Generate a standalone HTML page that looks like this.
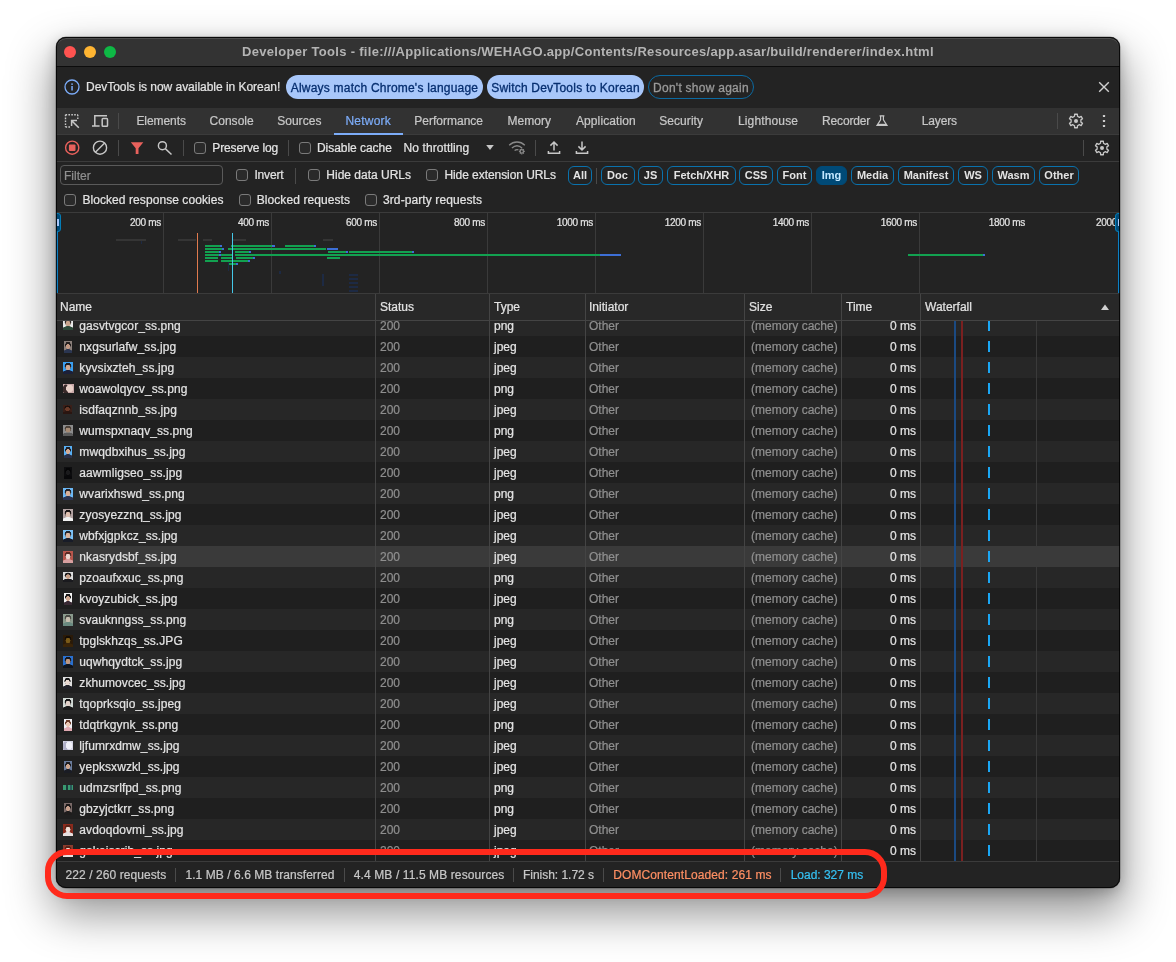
<!DOCTYPE html>
<html lang="en"><head><meta charset="utf-8"><title>Developer Tools</title>
<style>
*{box-sizing:border-box;margin:0;padding:0}
html,body{width:1176px;height:962px;overflow:hidden;background:#fff}
body{font-family:"Liberation Sans",sans-serif;font-size:12px;color:#e3e3e3;position:relative;-webkit-text-stroke:.22px}
#win{position:absolute;left:56px;top:37px;width:1064px;height:851px;border-radius:10px;background:#232323;
 box-shadow:0 0 0 .5px rgba(0,0,0,.35),0 22px 45px 4px rgba(0,0,0,.42),0 4px 14px rgba(0,0,0,.22);}
#edge{position:absolute;inset:0;border-radius:10px;border:1px solid rgba(0,0,0,.8);box-shadow:inset 0 1px 0 rgba(255,255,255,.13);pointer-events:none}
#clip{position:absolute;inset:0;border-radius:10px;overflow:hidden}
#pg{will-change:transform;position:absolute;left:-56px;top:-37px;width:1176px;height:962px}
#pg>*{position:absolute}
.a{position:absolute;white-space:nowrap;line-height:16px}
#title{left:56px;top:37px;width:1064px;height:30px;background:#333333;border-bottom:1px solid #0c0c0c}
#ttext{-webkit-text-stroke:0;left:56px;width:1064px;top:44px;text-align:center;font-weight:bold;font-size:13px;color:#b4b4b4;line-height:16px}
.tl{width:12px;height:12px;border-radius:50%;top:46px}
#info{left:56px;top:67px;width:1064px;height:41px;background:#232323}
#tabs{left:56px;top:108px;width:1064px;height:27px;background:#323232;border-bottom:1px solid #3b3b3b}
#tool{left:56px;top:135px;width:1064px;height:27px;background:#232323;border-bottom:1px solid #3b3b3b}
.tab{top:113px;color:#c7c7c7;font-size:12px}
.sep{width:1px;background:#4a4a4a}
.cb{width:12px;height:12px;border:1px solid #7a7a7a;border-radius:3px;background:#2a2a2a}
.btn{top:75px;height:24px;border-radius:12px;-webkit-text-stroke:.3px;background:#a8c7fa;color:#062e6f;font-size:12px;line-height:24px;padding-top:1px;text-align:center}
.pill{-webkit-text-stroke:0;top:166px;height:19px;border:1px solid #0a72ad;border-radius:6px;font-size:11px;font-weight:bold;color:#e3e3e3;line-height:17px;text-align:center}
.pill.sel{background:#004a77;border-color:#004a77;color:#c2e7ff}
#ov{left:56px;top:212px;width:1064px;height:82px;background:#232323;border-top:1px solid #3b3b3b;border-bottom:1px solid #3b3b3b}
.gl{top:213px;width:1px;height:80px;background:#3a3a3a}
.ol{top:215px;font-size:10px;letter-spacing:-.3px;color:#e3e3e3;text-align:right;width:60px;line-height:16px}
.bar{height:2px;background:#12a150}
.bb{height:2px;background:#3d6fd6}
.gb{height:2px;background:#353535}
#hdr{left:56px;top:294px;width:1064px;height:27px;background:#282828;border-bottom:1px solid #444}
.h{top:299px;color:#e3e3e3}
.cs{width:1px;background:#444;top:294px;height:568px}
#body{left:56px;top:321px;width:1064px;height:541px;overflow:hidden}
.r{position:absolute;left:0;width:1064px;height:21px;background:#1f1f1f}
.r.odd{background:#272727}
.r.hov{background:#3a3a3a}
.r span{position:absolute;top:3px;line-height:16px;white-space:nowrap}
.r .n{left:23.3px;color:#e3e3e3;letter-spacing:.09px}
.r .s{left:324px;color:#8f8f8f}
.r .t{left:438px;color:#e3e3e3}
.r .in{left:533px;color:#8f8f8f}
.r .sz{left:695px;color:#8f8f8f}
.r .tm{right:204px;color:#e3e3e3}
.r .tk{position:absolute;left:932px;top:5px;width:2px;height:11px;background:#1aa7f5}
.r .th{position:absolute}
#status{left:56px;top:861px;width:1064px;height:27px;background:#232323;border-top:1px solid #3b3b3b}
.st{top:867px;color:#c7c7c7}
#ann{left:45px;top:848.5px;width:841.5px;height:50.5px;border:6.5px solid #ff2a1c;border-radius:22px}

</style></head><body>
<div id="win"><div id="clip"><div id="pg">
<div id="title"></div>
<div class="tl" style="left:64px;background:#ff5350"></div>
<div class="tl" style="left:84px;background:#ffb532"></div>
<div class="tl" style="left:104px;background:#0eb845"></div>
<div id="ttext" class="a" style="top:44px;letter-spacing:0.302px">Developer Tools - file:///Applications/WEHAGO.app/Contents/Resources/app.asar/build/renderer/index.html</div>

<div id="info"></div>
<svg style="left:64px;top:79px" width="16" height="16" viewBox="0 0 16 16"><circle cx="8" cy="8" r="7" fill="none" stroke="#7cacf8" stroke-width="1.3"/><rect x="7.3" y="7" width="1.5" height="4.5" fill="#7cacf8"/><rect x="7.3" y="4.4" width="1.5" height="1.5" fill="#7cacf8"/></svg>
<div class="a" style="left:86px;top:79px;color:#e3e3e3;letter-spacing:-0.033px">DevTools is now available in Korean!</div>
<div class="a btn" style="left:286px;width:197px;letter-spacing:0.216px">Always match Chrome's language</div>
<div class="a btn" style="left:487px;width:157px;letter-spacing:0.208px">Switch DevTools to Korean</div>
<div class="a btn" style="left:648px;width:106px;background:none;border:1px solid #0b6aa2;color:#9a9a9a;line-height:22px;letter-spacing:0.261px">Don't show again</div>
<svg style="left:1098px;top:81px" width="12" height="12" viewBox="0 0 12 12"><path d="M1.2 1.2L10.8 10.8M10.8 1.2L1.2 10.8" stroke="#d0d0d0" stroke-width="1.4" fill="none"/></svg>

<div id="tabs"></div>
<div class="a tab" style="left:136.4px;letter-spacing:-0.062px">Elements</div>
<div class="a tab" style="left:209.5px;letter-spacing:0.028px">Console</div>
<div class="a tab" style="left:277.2px;letter-spacing:0.028px">Sources</div>
<div class="a tab" style="left:345.4px;color:#7cacf8;letter-spacing:0.231px">Network</div>
<div style="left:334px;top:133px;width:69px;height:2px;background:#7cacf8"></div>
<div class="a tab" style="left:414.3px;letter-spacing:-0.0px">Performance</div>
<div class="a tab" style="left:507.5px;letter-spacing:0.031px">Memory</div>
<div class="a tab" style="left:575.9px;letter-spacing:0.118px">Application</div>
<div class="a tab" style="left:659.3px;letter-spacing:0.049px">Security</div>
<div class="a tab" style="left:738px;letter-spacing:0.142px">Lighthouse</div>
<div class="a tab" style="left:822px;letter-spacing:-0.151px">Recorder</div>
<div class="a tab" style="left:921.8px;letter-spacing:-0.166px">Layers</div>
<div class="sep" style="left:118px;top:113px;height:16px"></div>
<div class="sep" style="left:1057px;top:113px;height:16px"></div>

<div id="tool"></div>
<!-- inspect -->
<svg style="left:64px;top:113px" width="16" height="16" viewBox="0 0 16 16" fill="none" stroke="#c7c7c7">
<path d="M1.5 1.7H13.8" stroke-width="1.4" stroke-dasharray="1.6 1.3"/>
<path d="M1.5 1.7V14" stroke-width="1.4" stroke-dasharray="1.6 1.3"/>
<path d="M13.8 1.7V6" stroke-width="1.4" stroke-dasharray="1.6 1.3"/>
<path d="M1.5 14H6" stroke-width="1.4" stroke-dasharray="1.6 1.3"/>
<path d="M14.8 14.8L8 8M7.6 13V7.6H13" stroke-width="1.5"/>
</svg>
<!-- device -->
<svg style="left:91px;top:113px" width="18" height="16" viewBox="0 0 18 16" fill="none" stroke="#c7c7c7" stroke-width="1.5">
<path d="M16 2.7H3.8V12.7M1 12.9H8.6"/>
<rect x="11.2" y="5.6" width="5.3" height="7.6" rx="0.8"/>
</svg>
<!-- record -->
<svg style="left:64px;top:140px" width="16" height="16" viewBox="0 0 16 16"><circle cx="8.2" cy="7.7" r="6.6" fill="none" stroke="#e8615c" stroke-width="1.4"/><rect x="4.9" y="4.4" width="6.6" height="6.6" rx="1" fill="#e8615c"/></svg>
<!-- clear -->
<svg style="left:92px;top:140px" width="16" height="16" viewBox="0 0 16 16" fill="none" stroke="#c7c7c7" stroke-width="1.4"><circle cx="8" cy="7.7" r="6.6"/><path d="M3.4 12.3L12.6 3.1"/></svg>
<!-- filter -->
<svg style="left:130px;top:141px" width="14" height="14" viewBox="0 0 14 14"><path d="M0.8 1.2H13.3L8.5 7.3V12.9H5.7V7.3Z" fill="#e8615c"/></svg>
<!-- search -->
<svg style="left:156px;top:139px" width="18" height="18" viewBox="0 0 18 18" fill="none" stroke="#c7c7c7" stroke-width="1.45"><circle cx="6.4" cy="6.7" r="4"/><path d="M9.3 9.6L15.5 15.5"/></svg>
<!-- dropdown -->
<svg style="left:486px;top:145px" width="8" height="5" viewBox="0 0 8 5"><path d="M0.2 0H7.8L4 5Z" fill="#c7c7c7"/></svg>
<!-- wifi -->
<svg style="left:508px;top:140px" width="18" height="16" viewBox="0 0 18 16" fill="none" stroke="#8a8a8a" stroke-width="1.3">
<path d="M1.2 5.2C5.6 0.9 12.4 0.9 16.8 5.2"/><path d="M3.9 8C7 5.2 11 5.2 14.1 8"/><path d="M6.6 10.6C8 9.5 9.2 9.4 10.4 9.9"/>
<circle cx="13.8" cy="11.4" r="1.7"/><path d="M13.8 8.4V9.4M13.8 13.4V14.4M10.9 11.4H11.9M15.8 11.4H16.8M11.8 9.3L12.5 10M15.1 12.7L15.9 13.5M15.9 9.3L15.1 10M11.8 13.5L12.5 12.8" stroke-width="1.1"/>
</svg>
<!-- upload -->
<svg style="left:547px;top:140px" width="14" height="15" viewBox="0 0 14 15" fill="none" stroke="#c7c7c7" stroke-width="1.5"><path d="M7 10.4V2.2M3.4 5.6L7 2L10.6 5.6M1.4 11V13.2H12.6V11"/></svg>
<!-- download -->
<svg style="left:575px;top:140px" width="14" height="15" viewBox="0 0 14 15" fill="none" stroke="#c7c7c7" stroke-width="1.5"><path d="M7 1.4V9.6M3.4 6.4L7 10L10.6 6.4M1.4 11V13.2H12.6V11"/></svg>
<!-- flask -->
<svg style="left:875px;top:114px" width="14" height="14" viewBox="0 0 14 14" fill="none" stroke="#c7c7c7" stroke-width="1.2"><path d="M4.6 1.8H9.4M5.6 1.8V5.8L2 11.4H12L8.4 5.8V1.8"/><path d="M3 10.4H11" stroke-width="1.2"/></svg>
<!-- gears -->
<svg style="left:1068px;top:113px" width="16" height="16" viewBox="-8 -8 16 16"><path d="M-1.48 -4.78 L-1.37 -6.76 L1.37 -6.76 L1.48 -4.78 L3.40 -3.67 L5.17 -4.57 L6.54 -2.19 L4.88 -1.11 L4.88 1.11 L6.54 2.19 L5.17 4.57 L3.40 3.67 L1.48 4.78 L1.37 6.76 L-1.37 6.76 L-1.48 4.78 L-3.40 3.67 L-5.17 4.57 L-6.54 2.19 L-4.88 1.11 L-4.88 -1.11 L-6.54 -2.19 L-5.17 -4.57 L-3.40 -3.67Z" fill="none" stroke="#c7c7c7" stroke-width="1.3" stroke-linejoin="round"/><circle r="2" fill="#c7c7c7"/></svg>
<svg style="left:1094px;top:140px" width="16" height="16" viewBox="-8 -8 16 16"><path d="M-1.48 -4.78 L-1.37 -6.76 L1.37 -6.76 L1.48 -4.78 L3.40 -3.67 L5.17 -4.57 L6.54 -2.19 L4.88 -1.11 L4.88 1.11 L6.54 2.19 L5.17 4.57 L3.40 3.67 L1.48 4.78 L1.37 6.76 L-1.37 6.76 L-1.48 4.78 L-3.40 3.67 L-5.17 4.57 L-6.54 2.19 L-4.88 1.11 L-4.88 -1.11 L-6.54 -2.19 L-5.17 -4.57 L-3.40 -3.67Z" fill="none" stroke="#c7c7c7" stroke-width="1.3" stroke-linejoin="round"/><circle r="2" fill="#c7c7c7"/></svg>
<!-- kebab -->
<svg style="left:1102px;top:114px" width="4" height="14" viewBox="0 0 4 14" fill="#d0d0d0"><rect x="0.9" y="0.9" width="2.2" height="2.2" rx=".5"/><rect x="0.9" y="5.9" width="2.2" height="2.2" rx=".5"/><rect x="0.9" y="10.9" width="2.2" height="2.2" rx=".5"/></svg>

<div class="sep" style="left:118px;top:140px;height:16px"></div>
<div class="sep" style="left:183px;top:140px;height:16px"></div>
<div class="sep" style="left:288px;top:140px;height:16px"></div>
<div class="sep" style="left:535px;top:140px;height:16px"></div>
<div class="sep" style="left:1083px;top:140px;height:16px"></div>
<div class="cb" style="left:194px;top:142px"></div>
<div class="a" style="left:212.3px;top:140px;letter-spacing:-0.125px">Preserve log</div>
<div class="cb" style="left:299px;top:142px"></div>
<div class="a" style="left:316.9px;top:140px;letter-spacing:-0.031px">Disable cache</div>
<div class="a" style="left:403.6px;top:140px;letter-spacing:0.075px">No throttling</div>

<div style="left:60px;top:165px;width:163px;height:20px;border:1px solid #5a5a5a;border-radius:4px;background:#232323"></div>
<div class="a" style="left:64px;top:168px;color:#8f8f8f">Filter</div>
<div class="cb" style="left:236px;top:169px"></div>
<div class="a" style="left:254.4px;top:167px;letter-spacing:-0.143px">Invert</div>
<div class="sep" style="left:295px;top:168px;height:16px"></div>
<div class="cb" style="left:308px;top:169px"></div>
<div class="a" style="left:326.3px;top:167px;letter-spacing:-0.001px">Hide data URLs</div>
<div class="cb" style="left:426px;top:169px"></div>
<div class="a" style="left:444.4px;top:167px;letter-spacing:-0.063px">Hide extension URLs</div>
<div class="a pill" style="left:568px;width:24px">All</div>
<div class="sep" style="left:596px;top:168px;height:16px"></div>
<div class="a pill" style="left:600.5px;width:34px">Doc</div>
<div class="a pill" style="left:638px;width:25px">JS</div>
<div class="a pill" style="left:667px;width:69px">Fetch/XHR</div>
<div class="a pill" style="left:739px;width:34px">CSS</div>
<div class="a pill" style="left:777px;width:35px">Font</div>
<div class="a pill sel" style="left:816px;width:31px">Img</div>
<div class="a pill" style="left:851px;width:43px">Media</div>
<div class="a pill" style="left:898px;width:56px">Manifest</div>
<div class="a pill" style="left:958px;width:30px">WS</div>
<div class="a pill" style="left:992px;width:43px">Wasm</div>
<div class="a pill" style="left:1039px;width:40px">Other</div>

<div class="cb" style="left:64px;top:194px"></div>
<div class="a" style="left:82.4px;top:192px;letter-spacing:0.073px">Blocked response cookies</div>
<div class="cb" style="left:239px;top:194px"></div>
<div class="a" style="left:256.7px;top:192px;letter-spacing:0.083px">Blocked requests</div>
<div class="cb" style="left:365px;top:194px"></div>
<div class="a" style="left:383px;top:192px;letter-spacing:0.095px">3rd-party requests</div>

<div id="ov"></div>
<div class="gl" style="left:163px"></div>
<div class="gl" style="left:271px"></div>
<div class="gl" style="left:379px"></div>
<div class="gl" style="left:487px"></div>
<div class="gl" style="left:595px"></div>
<div class="gl" style="left:703px"></div>
<div class="gl" style="left:811px"></div>
<div class="gl" style="left:919px"></div>
<div class="a ol" style="left:101px">200 ms</div>
<div class="a ol" style="left:209px">400 ms</div>
<div class="a ol" style="left:317px">600 ms</div>
<div class="a ol" style="left:425px">800 ms</div>
<div class="a ol" style="left:533px">1000 ms</div>
<div class="a ol" style="left:641px">1200 ms</div>
<div class="a ol" style="left:749px">1400 ms</div>
<div class="a ol" style="left:857px">1600 ms</div>
<div class="a ol" style="left:965px">1800 ms</div>
<div class="a ol" style="left:1078px;width:40px;text-align:left;left:1096px">2000</div>
<div class="gb" style="left:116px;top:239px;width:30px"></div>
<div class="gb" style="left:178px;top:239px;width:18px"></div>
<div class="gb" style="left:203px;top:239px;width:9px"></div>
<div class="gb" style="left:233px;top:239px;width:13px"></div>
<div class="gb" style="left:323px;top:239px;width:10px"></div>
<div class="bar" style="left:205px;top:245px;width:15px"></div>
<div class="bb" style="left:220px;top:245px;width:2px"></div>
<div class="bar" style="left:231px;top:245px;width:41px"></div>
<div class="bb" style="left:272px;top:245px;width:3px"></div>
<div class="bar" style="left:285px;top:245px;width:29px"></div>
<div class="bb" style="left:314px;top:245px;width:2px"></div>
<div class="bar" style="left:205px;top:248px;width:17px"></div>
<div class="bb" style="left:222px;top:248px;width:2px"></div>
<div class="bar" style="left:228px;top:248px;width:98px"></div>
<div class="bb" style="left:327px;top:248px;width:11px"></div>
<div class="bar" style="left:205px;top:251px;width:14px"></div>
<div class="bb" style="left:219px;top:251px;width:2px"></div>
<div class="bar" style="left:235px;top:251px;width:14px"></div>
<div class="bb" style="left:249px;top:251px;width:2px"></div>
<div class="bar" style="left:328px;top:251px;width:18px"></div>
<div class="bb" style="left:346px;top:251px;width:2px"></div>
<div class="bar" style="left:349px;top:251px;width:63px"></div>
<div class="bb" style="left:412px;top:251px;width:2px"></div>
<div class="bar" style="left:205px;top:254px;width:14px"></div>
<div class="bar" style="left:221px;top:254px;width:11px"></div>
<div class="bb" style="left:219px;top:254px;width:2px"></div>
<div class="bar" style="left:235px;top:254px;width:365px"></div>
<div class="bb" style="left:600px;top:254px;width:21px"></div>
<div class="bar" style="left:205px;top:257px;width:13px"></div>
<div class="bar" style="left:221px;top:257px;width:11px"></div>
<div class="bar" style="left:236px;top:257px;width:17px"></div>
<div class="bb" style="left:253px;top:257px;width:2px"></div>
<div class="bar" style="left:327px;top:257px;width:13px"></div>
<div class="bar" style="left:205px;top:260px;width:13px"></div>
<div class="bar" style="left:221px;top:260px;width:27px"></div>
<div class="bb" style="left:248px;top:260px;width:2px"></div>
<div class="bar" style="left:229px;top:263px;width:7px"></div>
<div class="bb" style="left:236px;top:263px;width:2px"></div>
<div class="bar" style="left:908px;top:254px;width:75px"></div>
<div class="bb" style="left:983px;top:254px;width:2px"></div>
<div style="left:279px;top:271px;width:2px;height:3px;background:#1d2a44"></div>
<div style="left:322px;top:274px;width:2px;height:12px;background:#1d2a44"></div>
<div style="left:349px;top:274px;width:9px;height:2px;background:#1d2a44"></div>
<div style="left:349px;top:278px;width:9px;height:2px;background:#1d2a44"></div>
<div style="left:349px;top:282px;width:9px;height:2px;background:#1d2a44"></div>
<div style="left:349px;top:286px;width:9px;height:2px;background:#1d2a44"></div>
<div style="left:349px;top:290px;width:9px;height:2px;background:#1d2a44"></div>
<div style="left:228px;top:262px;width:1px;height:9px;background:#1d2a44"></div>
<div style="left:141px;top:241px;width:1px;height:3px;background:#1d2a44"></div>
<div style="left:197px;top:233px;width:1px;height:60px;background:#e07a4e"></div>
<div style="left:232px;top:233px;width:1px;height:60px;background:#45c8e8"></div>
<div style="left:56px;top:213px;width:2px;height:80px;background:#0b7fc4"></div>
<div style="left:54px;top:213px;width:7px;height:19px;background:#004a77;border:1px solid #047db7;border-radius:3px"></div>
<div style="left:57px;top:219px;width:1.5px;height:7px;background:#a8c7fa"></div>
<div style="left:1118px;top:213px;width:2px;height:80px;background:#0b7fc4"></div>
<div style="left:1115px;top:213px;width:7px;height:19px;background:#004a77;border:1px solid #047db7;border-radius:3px"></div>
<div style="left:1117.5px;top:219px;width:1.5px;height:7px;background:#a8c7fa"></div>

<div id="hdr"></div>
<div class="a h" style="left:60px">Name</div>
<div class="a h" style="left:380px">Status</div>
<div class="a h" style="left:494px">Type</div>
<div class="a h" style="left:589px">Initiator</div>
<div class="a h" style="left:749px">Size</div>
<div class="a h" style="left:846px">Time</div>
<div class="a h" style="left:925px">Waterfall</div>
<svg style="left:1100px;top:304px" width="10" height="6" viewBox="0 0 10 6"><path d="M1 6L5 0.5L9 6Z" fill="#d0d0d0"/></svg>

<div id="body">
<div class="r odd" style="top:-6px"><i class="th" style="left:7px;top:3px;width:10px;height:12px;background:radial-gradient(ellipse 27% 24% at 50% 46%,#c9a48c 85%,transparent 100%),radial-gradient(ellipse 36% 30% at 50% 34%,#2a2624 88%,transparent 100%),radial-gradient(ellipse 70% 42% at 50% 108%,#2f4a3a 90%,transparent 100%),#e8e8e8"></i><span class="n">gasvtvgcor_ss.png</span><span class="s">200</span><span class="t">png</span><span class="in">Other</span><span class="sz">(memory cache)</span><span class="tm">0 ms</span><b class="tk"></b></div>
<div class="r" style="top:15px"><i class="th" style="left:8.3px;top:4.5px;width:8px;height:12px;background:radial-gradient(ellipse 27% 24% at 50% 46%,#c49a84 85%,transparent 100%),radial-gradient(ellipse 36% 30% at 50% 34%,#241f1e 88%,transparent 100%),radial-gradient(ellipse 70% 42% at 50% 108%,#2a3550 90%,transparent 100%),#8a7f7a"></i><span class="n">nxgsurlafw_ss.jpg</span><span class="s">200</span><span class="t">jpeg</span><span class="in">Other</span><span class="sz">(memory cache)</span><span class="tm">0 ms</span><b class="tk"></b></div>
<div class="r odd" style="top:36px"><i class="th" style="left:7px;top:4.5px;width:10px;height:12px;background:radial-gradient(ellipse 27% 24% at 50% 46%,#d0a890 85%,transparent 100%),radial-gradient(ellipse 36% 30% at 50% 34%,#1c1c22 88%,transparent 100%),radial-gradient(ellipse 70% 42% at 50% 108%,#1c2038 90%,transparent 100%),#3a9ff0"></i><span class="n">kyvsixzteh_ss.jpg</span><span class="s">200</span><span class="t">jpeg</span><span class="in">Other</span><span class="sz">(memory cache)</span><span class="tm">0 ms</span><b class="tk"></b></div>
<div class="r" style="top:57px"><i class="th" style="left:7px;top:6px;width:10.5px;height:8.5px;background:radial-gradient(ellipse 35% 45% at 60% 50%,#e8d0c8 85%,transparent),radial-gradient(ellipse 30% 60% at 25% 60%,#3a2a2a 80%,transparent),#c9a9a9"></i><span class="n">woawolqycv_ss.png</span><span class="s">200</span><span class="t">png</span><span class="in">Other</span><span class="sz">(memory cache)</span><span class="tm">0 ms</span><b class="tk"></b></div>
<div class="r odd" style="top:78px"><i class="th" style="left:7px;top:5.8px;width:9px;height:8.8px;background:radial-gradient(ellipse 27% 24% at 50% 46%,#6a3a28 85%,transparent 100%),radial-gradient(ellipse 36% 30% at 50% 34%,#1a0f0c 88%,transparent 100%),radial-gradient(ellipse 70% 42% at 50% 108%,#2a1510 90%,transparent 100%),#3a1f18"></i><span class="n">isdfaqznnb_ss.jpg</span><span class="s">200</span><span class="t">jpeg</span><span class="in">Other</span><span class="sz">(memory cache)</span><span class="tm">0 ms</span><b class="tk"></b></div>
<div class="r" style="top:99px"><i class="th" style="left:7px;top:5px;width:10px;height:11.3px;background:radial-gradient(ellipse 27% 24% at 50% 46%,#a58a74 85%,transparent 100%),radial-gradient(ellipse 36% 30% at 50% 34%,#4a4038 88%,transparent 100%),radial-gradient(ellipse 70% 42% at 50% 108%,#5a5a5a 90%,transparent 100%),#8c8c8c"></i><span class="n">wumspxnaqv_ss.png</span><span class="s">200</span><span class="t">png</span><span class="in">Other</span><span class="sz">(memory cache)</span><span class="tm">0 ms</span><b class="tk"></b></div>
<div class="r odd" style="top:120px"><i class="th" style="left:8px;top:4.5px;width:8px;height:12px;background:radial-gradient(ellipse 27% 24% at 50% 46%,#d4ac94 85%,transparent 100%),radial-gradient(ellipse 36% 30% at 50% 34%,#1e1e24 88%,transparent 100%),radial-gradient(ellipse 70% 42% at 50% 108%,#2a3048 90%,transparent 100%),#58b0f5"></i><span class="n">mwqdbxihus_ss.jpg</span><span class="s">200</span><span class="t">jpeg</span><span class="in">Other</span><span class="sz">(memory cache)</span><span class="tm">0 ms</span><b class="tk"></b></div>
<div class="r" style="top:141px"><i class="th" style="left:8px;top:4.5px;width:8px;height:12px;background:radial-gradient(ellipse 27% 24% at 50% 46%,#1a1a1c 85%,transparent 100%),radial-gradient(ellipse 36% 30% at 50% 34%,#050506 88%,transparent 100%),radial-gradient(ellipse 70% 42% at 50% 108%,#08080a 90%,transparent 100%),#0c0c0e"></i><span class="n">aawmligseo_ss.jpg</span><span class="s">200</span><span class="t">jpeg</span><span class="in">Other</span><span class="sz">(memory cache)</span><span class="tm">0 ms</span><b class="tk"></b></div>
<div class="r odd" style="top:162px"><i class="th" style="left:7px;top:4.5px;width:10px;height:12px;background:radial-gradient(ellipse 27% 24% at 50% 46%,#d8b098 85%,transparent 100%),radial-gradient(ellipse 36% 30% at 50% 34%,#222228 88%,transparent 100%),radial-gradient(ellipse 70% 42% at 50% 108%,#2c3450 90%,transparent 100%),#6cb8f5"></i><span class="n">wvarixhswd_ss.png</span><span class="s">200</span><span class="t">png</span><span class="in">Other</span><span class="sz">(memory cache)</span><span class="tm">0 ms</span><b class="tk"></b></div>
<div class="r" style="top:183px"><i class="th" style="left:7px;top:4.5px;width:10px;height:12px;background:radial-gradient(ellipse 27% 24% at 50% 46%,#e0c0b0 85%,transparent 100%),radial-gradient(ellipse 36% 30% at 50% 34%,#1a1414 88%,transparent 100%),radial-gradient(ellipse 70% 42% at 50% 108%,#f0f0f0 90%,transparent 100%),#b4a4a4"></i><span class="n">zyosyezznq_ss.jpg</span><span class="s">200</span><span class="t">jpeg</span><span class="in">Other</span><span class="sz">(memory cache)</span><span class="tm">0 ms</span><b class="tk"></b></div>
<div class="r odd" style="top:204px"><i class="th" style="left:7px;top:4.5px;width:10px;height:12px;background:radial-gradient(ellipse 27% 24% at 50% 46%,#dab49c 85%,transparent 100%),radial-gradient(ellipse 36% 30% at 50% 34%,#20242c 88%,transparent 100%),radial-gradient(ellipse 70% 42% at 50% 108%,#181c28 90%,transparent 100%),#7ac0f5"></i><span class="n">wbfxjgpkcz_ss.jpg</span><span class="s">200</span><span class="t">jpeg</span><span class="in">Other</span><span class="sz">(memory cache)</span><span class="tm">0 ms</span><b class="tk"></b></div>
<div class="r hov" style="top:225px"><i class="th" style="left:7px;top:4.5px;width:10px;height:12px;background:radial-gradient(ellipse 27% 24% at 50% 46%,#ecd8d0 85%,transparent 100%),radial-gradient(ellipse 36% 30% at 50% 34%,#5a2a24 88%,transparent 100%),radial-gradient(ellipse 70% 42% at 50% 108%,#d8a0a0 90%,transparent 100%),#b8564c"></i><span class="n">nkasrydsbf_ss.jpg</span><span class="s">200</span><span class="t">jpeg</span><span class="in">Other</span><span class="sz">(memory cache)</span><span class="tm">0 ms</span><b class="tk"></b></div>
<div class="r odd" style="top:246px"><i class="th" style="left:7px;top:5px;width:10px;height:10px;background:radial-gradient(ellipse 27% 24% at 50% 46%,#c8a088 85%,transparent 100%),radial-gradient(ellipse 36% 30% at 50% 34%,#1c1a1a 88%,transparent 100%),radial-gradient(ellipse 70% 42% at 50% 108%,#1a1a1e 90%,transparent 100%),#dcdcdc"></i><span class="n">pzoaufxxuc_ss.png</span><span class="s">200</span><span class="t">png</span><span class="in">Other</span><span class="sz">(memory cache)</span><span class="tm">0 ms</span><b class="tk"></b></div>
<div class="r" style="top:267px"><i class="th" style="left:8px;top:4.5px;width:8px;height:12px;background:radial-gradient(ellipse 27% 24% at 50% 46%,#d0a890 85%,transparent 100%),radial-gradient(ellipse 36% 30% at 50% 34%,#1a1818 88%,transparent 100%),radial-gradient(ellipse 70% 42% at 50% 108%,#3a2a34 90%,transparent 100%),#f4f4f4"></i><span class="n">kvoyzubick_ss.jpg</span><span class="s">200</span><span class="t">jpeg</span><span class="in">Other</span><span class="sz">(memory cache)</span><span class="tm">0 ms</span><b class="tk"></b></div>
<div class="r odd" style="top:288px"><i class="th" style="left:7px;top:4.5px;width:10px;height:12px;background:radial-gradient(ellipse 27% 24% at 50% 46%,#c8c0b0 85%,transparent 100%),radial-gradient(ellipse 36% 30% at 50% 34%,#4a4a44 88%,transparent 100%),radial-gradient(ellipse 70% 42% at 50% 108%,#6a8a80 90%,transparent 100%),#8a9a8c"></i><span class="n">svauknngss_ss.png</span><span class="s">200</span><span class="t">png</span><span class="in">Other</span><span class="sz">(memory cache)</span><span class="tm">0 ms</span><b class="tk"></b></div>
<div class="r" style="top:309px"><i class="th" style="left:7px;top:4.5px;width:10px;height:12px;background:radial-gradient(ellipse 27% 24% at 50% 46%,#7a5a18 85%,transparent 100%),radial-gradient(ellipse 36% 30% at 50% 34%,#140c04 88%,transparent 100%),radial-gradient(ellipse 70% 42% at 50% 108%,#3a2408 90%,transparent 100%),#2a1a08"></i><span class="n">tpglskhzqs_ss.JPG</span><span class="s">200</span><span class="t">jpeg</span><span class="in">Other</span><span class="sz">(memory cache)</span><span class="tm">0 ms</span><b class="tk"></b></div>
<div class="r odd" style="top:330px"><i class="th" style="left:7px;top:4.5px;width:10px;height:12px;background:radial-gradient(ellipse 27% 24% at 50% 46%,#c09880 85%,transparent 100%),radial-gradient(ellipse 36% 30% at 50% 34%,#141820 88%,transparent 100%),radial-gradient(ellipse 70% 42% at 50% 108%,#10141c 90%,transparent 100%),#2a70d0"></i><span class="n">uqwhqydtck_ss.jpg</span><span class="s">200</span><span class="t">jpeg</span><span class="in">Other</span><span class="sz">(memory cache)</span><span class="tm">0 ms</span><b class="tk"></b></div>
<div class="r" style="top:351px"><i class="th" style="left:7px;top:4.5px;width:8.5px;height:12px;background:radial-gradient(ellipse 27% 24% at 50% 46%,#e8d8d0 85%,transparent 100%),radial-gradient(ellipse 36% 30% at 50% 34%,#181818 88%,transparent 100%),radial-gradient(ellipse 70% 42% at 50% 108%,#202028 90%,transparent 100%),#e0e0e0"></i><span class="n">zkhumovcec_ss.jpg</span><span class="s">200</span><span class="t">jpeg</span><span class="in">Other</span><span class="sz">(memory cache)</span><span class="tm">0 ms</span><b class="tk"></b></div>
<div class="r odd" style="top:372px"><i class="th" style="left:7px;top:4.5px;width:10px;height:12px;background:radial-gradient(ellipse 27% 24% at 50% 46%,#e0d0c8 85%,transparent 100%),radial-gradient(ellipse 36% 30% at 50% 34%,#141414 88%,transparent 100%),radial-gradient(ellipse 70% 42% at 50% 108%,#1a1a1a 90%,transparent 100%),#d0d8d4"></i><span class="n">tqoprksqio_ss.jpeg</span><span class="s">200</span><span class="t">jpeg</span><span class="in">Other</span><span class="sz">(memory cache)</span><span class="tm">0 ms</span><b class="tk"></b></div>
<div class="r" style="top:393px"><i class="th" style="left:8px;top:4.5px;width:8px;height:12px;background:radial-gradient(ellipse 27% 24% at 50% 46%,#ecc8b4 85%,transparent 100%),radial-gradient(ellipse 36% 30% at 50% 34%,#6a3a28 88%,transparent 100%),radial-gradient(ellipse 70% 42% at 50% 108%,#e0a8b0 90%,transparent 100%),#f0f0f4"></i><span class="n">tdqtrkgynk_ss.png</span><span class="s">200</span><span class="t">png</span><span class="in">Other</span><span class="sz">(memory cache)</span><span class="tm">0 ms</span><b class="tk"></b></div>
<div class="r odd" style="top:414px"><i class="th" style="left:7px;top:6px;width:10px;height:9px;background:radial-gradient(ellipse 35% 45% at 60% 50%,#f0f0f8 85%,transparent),radial-gradient(ellipse 30% 60% at 25% 60%,#b0b0c8 80%,transparent),#d4d4e4"></i><span class="n">ljfumrxdmw_ss.jpg</span><span class="s">200</span><span class="t">jpeg</span><span class="in">Other</span><span class="sz">(memory cache)</span><span class="tm">0 ms</span><b class="tk"></b></div>
<div class="r" style="top:435px"><i class="th" style="left:8px;top:4.5px;width:8px;height:12px;background:radial-gradient(ellipse 27% 24% at 50% 46%,#d0a890 85%,transparent 100%),radial-gradient(ellipse 36% 30% at 50% 34%,#1c1c20 88%,transparent 100%),radial-gradient(ellipse 70% 42% at 50% 108%,#1a1c24 90%,transparent 100%),#6a7c9c"></i><span class="n">yepksxwzkl_ss.jpg</span><span class="s">200</span><span class="t">jpeg</span><span class="in">Other</span><span class="sz">(memory cache)</span><span class="tm">0 ms</span><b class="tk"></b></div>
<div class="r odd" style="top:456px"><i class="th" style="left:7px;top:7.8px;width:10px;height:5.2px;background:linear-gradient(90deg,#3a9a70 0 30%,#1a3a3a 30% 55%,#3a9a70 55% 75%,#2a5a5a 75% 85%,#3a9a70 85%)"></i><span class="n">udmzsrlfpd_ss.png</span><span class="s">200</span><span class="t">png</span><span class="in">Other</span><span class="sz">(memory cache)</span><span class="tm">0 ms</span><b class="tk"></b></div>
<div class="r" style="top:477px"><i class="th" style="left:8px;top:4.5px;width:8px;height:12px;background:radial-gradient(ellipse 27% 24% at 50% 46%,#c8a08c 85%,transparent 100%),radial-gradient(ellipse 36% 30% at 50% 34%,#1c1818 88%,transparent 100%),radial-gradient(ellipse 70% 42% at 50% 108%,#1e1c1c 90%,transparent 100%),#7a6a68"></i><span class="n">gbzyjctkrr_ss.png</span><span class="s">200</span><span class="t">png</span><span class="in">Other</span><span class="sz">(memory cache)</span><span class="tm">0 ms</span><b class="tk"></b></div>
<div class="r odd" style="top:498px"><i class="th" style="left:7px;top:4.5px;width:10px;height:12px;background:radial-gradient(ellipse 27% 24% at 50% 46%,#f0e0d8 85%,transparent 100%),radial-gradient(ellipse 36% 30% at 50% 34%,#5a2418 88%,transparent 100%),radial-gradient(ellipse 70% 42% at 50% 108%,#e8e0e0 90%,transparent 100%),#8a2a1c"></i><span class="n">avdoqdovmi_ss.jpg</span><span class="s">200</span><span class="t">jpeg</span><span class="in">Other</span><span class="sz">(memory cache)</span><span class="tm">0 ms</span><b class="tk"></b></div>
<div class="r" style="top:519px"><i class="th" style="left:7px;top:4.5px;width:10px;height:12px;background:radial-gradient(ellipse 27% 24% at 50% 46%,#f0e0d8 85%,transparent 100%),radial-gradient(ellipse 36% 30% at 50% 34%,#5a2418 88%,transparent 100%),radial-gradient(ellipse 70% 42% at 50% 108%,#e8e0e0 90%,transparent 100%),#8a3a2c"></i><span class="n">gakeiscrib_ss.jpg</span><span class="s">200</span><span class="t">jpeg</span><span class="in">Other</span><span class="sz">(memory cache)</span><span class="tm">0 ms</span><b class="tk"></b></div>
</div>
<div class="cs" style="left:375px"></div>
<div class="cs" style="left:489px"></div>
<div class="cs" style="left:585px"></div>
<div class="cs" style="left:744px"></div>
<div class="cs" style="left:841px"></div>
<div class="cs" style="left:920px"></div>
<div style="left:954px;top:321px;width:1.6px;height:541px;background:#1b4a82"></div>
<div style="left:961px;top:321px;width:1.6px;height:541px;background:#7a2020"></div>
<div style="left:1036px;top:321px;width:1px;height:541px;background:#3a3a3a"></div>

<div id="status"></div>
<div class="a st" style="left:65.5px;letter-spacing:0.076px">222 / 260 requests</div>
<div class="sep" style="left:175px;top:868px;height:14px"></div>
<div class="a st" style="left:185.5px;letter-spacing:0.057px">1.1 MB / 6.6 MB transferred</div>
<div class="sep" style="left:344px;top:868px;height:14px"></div>
<div class="a st" style="left:353.8px;letter-spacing:0.106px">4.4 MB / 11.5 MB resources</div>
<div class="sep" style="left:513px;top:868px;height:14px"></div>
<div class="a st" style="left:523px;letter-spacing:-0.029px">Finish: 1.72 s</div>
<div class="sep" style="left:603px;top:868px;height:14px"></div>
<div class="a st" style="left:613.2px;color:#ff8f63;letter-spacing:0.1px">DOMContentLoaded: 261 ms</div>
<div class="sep" style="left:780px;top:868px;height:14px"></div>
<div class="a st" style="left:790.7px;color:#35c0f2;letter-spacing:-0.02px">Load: 327 ms</div>
</div></div><div id="edge"></div></div>
<div id="ann" style="position:absolute"></div>
</body></html>
